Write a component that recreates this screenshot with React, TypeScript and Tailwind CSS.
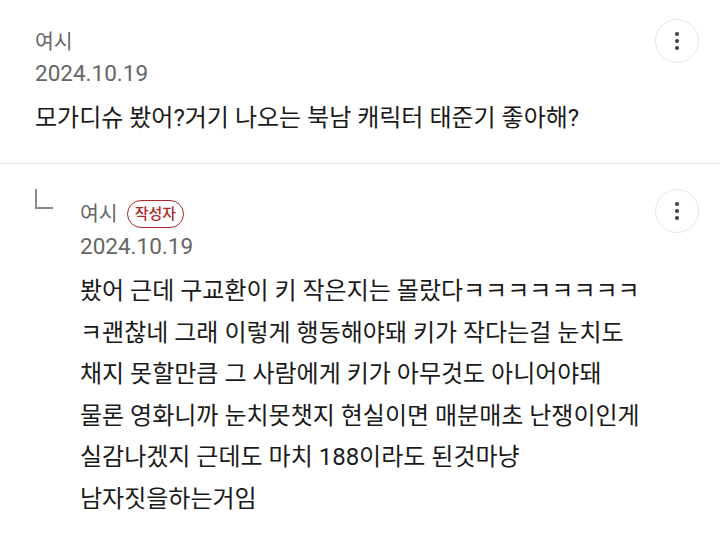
import React from "react";

const font = { fontFamily: 'Roboto, "Noto Sans CJK KR", sans-serif' };

function MoreButton() {
  return (
    <button className="w-11 h-11 rounded-full border border-gray-200 flex items-center justify-center shrink-0">
      <svg width="6" height="20" viewBox="0 0 6 20">
        <circle cx="3" cy="3" r="2.1" fill="#444" />
        <circle cx="3" cy="10" r="2.1" fill="#444" />
        <circle cx="3" cy="17" r="2.1" fill="#444" />
      </svg>
    </button>
  );
}

export default function App() {
  const reply = [
    "봤어 근데 구교환이 키 작은지는 몰랐다ㅋㅋㅋㅋㅋㅋㅋㅋ",
    "ㅋ괜찮네 그래 이렇게 행동해야돼 키가 작다는걸 눈치도",
    "채지 못할만큼 그 사람에게 키가 아무것도 아니어야돼",
    "물론 영화니까 눈치못챗지 현실이면 매분매초 난쟁이인게",
    "실감나겠지 근데도 마치 188이라도 된것마냥",
    "남자짓을하는거임",
  ];

  return (
    <div className="w-[720px] h-[534px] bg-white overflow-hidden" style={font}>
      <div className="flex pl-[35px] pr-[21px] pt-[27px] pb-[30px] border-b border-[#e4e4e4]">
        <div className="flex-1">
          <div className="text-[20.5px] leading-[30px] text-[#666]">여시</div>
          <div className="text-[22.5px] leading-[32px] text-[#666]">2024.10.19</div>
          <div className="mt-[14px] text-[24px] leading-[30px] text-[#1a1a1a]">
            모가디슈 봤어?거기 나오는 북남 캐릭터 태준기 좋아해?
          </div>
        </div>
        <div className="-mt-[8px]">
          <MoreButton />
        </div>
      </div>

      <div className="flex pl-[35px] pr-[21px] pt-[23px]">
        <div className="w-[45px] shrink-0 pt-[2px]">
          <div className="w-[18px] h-[20px] border-l-2 border-b-2 border-[#8a8a8a]" />
        </div>
        <div className="flex-1">
          <div className="flex items-center gap-[9px] mt-[12px]">
            <span className="text-[20.5px] leading-[30px] text-[#666]">여시</span>
            <span className="px-[7px] h-[28px] flex items-center rounded-full border border-[#ab2a2a] text-[#ab2a2a] text-[15px] font-medium">
              작성자
            </span>
          </div>
          <div className="mt-[1px] text-[22.5px] leading-[32px] text-[#666]">2024.10.19</div>
          <div className="mt-[9px] text-[24px] leading-[41.5px] text-[#1a1a1a]">
            {reply.map((l, i) => (
              <div key={i}>{l}</div>
            ))}
          </div>
        </div>
        <div className="pt-[2px]">
          <MoreButton />
        </div>
      </div>
    </div>
  );
}
